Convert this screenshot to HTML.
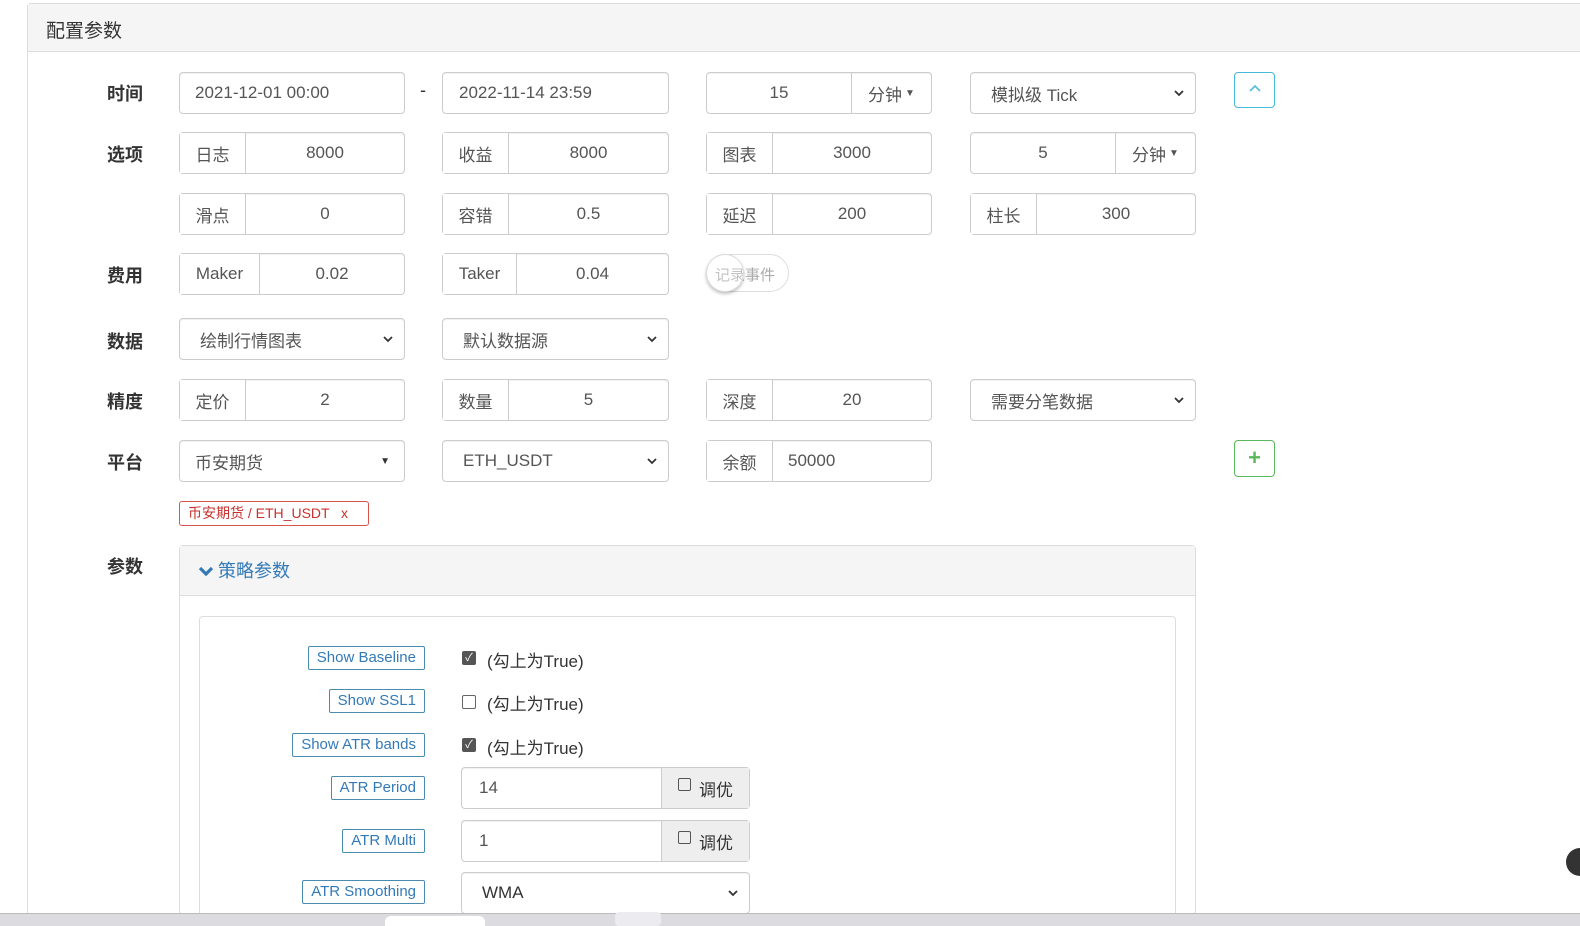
<!DOCTYPE html>
<html><head><meta charset="utf-8"><style>
*{box-sizing:border-box;margin:0;padding:0}
html,body{width:1580px;height:926px;overflow:hidden}
body{background:#fff;font-family:"Liberation Sans","Noto Sans CJK SC",sans-serif;color:#555;position:relative}
.a{position:absolute}
.panel{left:27px;top:3px;width:1560px;height:920px;border:1px solid #ddd;border-radius:4px}
.ph{left:28px;top:4px;width:1552px;height:48px;background:#f5f5f5;border-bottom:1px solid #ddd;font-size:19px;color:#333;padding:12px 18px}
.lb{font-weight:bold;font-size:18px;color:#333;left:107px}
.box{height:42px;border:1px solid #ccc;border-radius:4px;display:flex;font-size:17px;color:#555;background:#fff;box-shadow:inset 0 1px 1px rgba(0,0,0,.06);white-space:nowrap}
.ad{border-right:1px solid #ccc;display:flex;align-items:center;justify-content:center;color:#555;background:#fff}
.v{flex:1;display:flex;align-items:center;justify-content:center}
.sel{align-items:center;padding-left:20px;justify-content:space-between;padding-right:10px}
.chev{width:12px;height:12px}
.tag{border:1px solid #4a8bb0;border-radius:2px;color:#337ab7;font-size:15px;height:24px;line-height:22px;padding:0 8px;right:1155px;white-space:nowrap}
.cb{width:14px;height:14px;border-radius:2px}
</style></head><body>
<div class="a panel"></div>
<div class="a ph">配置参数</div>

<div class="a lb" style="top:80px">时间</div>
<div class="a lb" style="top:141px">选项</div>
<div class="a lb" style="top:262px">费用</div>
<div class="a lb" style="top:328px">数据</div>
<div class="a lb" style="top:388px">精度</div>
<div class="a lb" style="top:449px">平台</div>
<div class="a lb" style="top:553px">参数</div>

<div class="a box" style="left:179px;top:72px;width:226px;padding-left:15px;align-items:center">2021-12-01 00:00</div>
<div class="a" style="left:420px;top:80px;font-size:18px;color:#333">-</div>
<div class="a box" style="left:442px;top:72px;width:227px;padding-left:16px;align-items:center">2022-11-14 23:59</div>
<div class="a box" style="left:706px;top:72px;width:226px"><div class="v" style="border-right:1px solid #ccc;width:145px;flex:none">15</div><div class="v">分钟 <span style="font-size:10px;margin-left:3px">▼</span></div></div>
<div class="a box sel" style="left:970px;top:72px;width:226px"><span>模拟级 Tick</span><svg class="chev" viewBox="0 0 12 12"><path d="M2 4l4 4 4-4" stroke="#333" stroke-width="1.8" fill="none"/></svg></div>
<div class="a" style="left:1234px;top:72px;width:41px;height:36px;border:1px solid #46b8da;border-radius:4px"><svg style="position:absolute;left:13px;top:10px" width="14" height="10" viewBox="0 0 14 10"><path d="M2 8l5-5 5 5" stroke="#5bc0de" stroke-width="1.8" fill="none"/></svg></div>

<div class="a box" style="left:179px;top:132px;width:226px"><div class="ad" style="width:66px">日志</div><div class="v">8000</div></div>
<div class="a box" style="left:442px;top:132px;width:227px"><div class="ad" style="width:66px">收益</div><div class="v">8000</div></div>
<div class="a box" style="left:706px;top:132px;width:226px"><div class="ad" style="width:66px">图表</div><div class="v">3000</div></div>
<div class="a box" style="left:970px;top:132px;width:226px"><div class="v" style="border-right:1px solid #ccc;width:145px;flex:none">5</div><div class="v">分钟 <span style="font-size:10px;margin-left:3px">▼</span></div></div>

<div class="a box" style="left:179px;top:193px;width:226px"><div class="ad" style="width:66px">滑点</div><div class="v">0</div></div>
<div class="a box" style="left:442px;top:193px;width:227px"><div class="ad" style="width:66px">容错</div><div class="v">0.5</div></div>
<div class="a box" style="left:706px;top:193px;width:226px"><div class="ad" style="width:66px">延迟</div><div class="v">200</div></div>
<div class="a box" style="left:970px;top:193px;width:226px"><div class="ad" style="width:66px">柱长</div><div class="v">300</div></div>

<div class="a box" style="left:179px;top:253px;width:226px"><div class="ad" style="width:80px">Maker</div><div class="v">0.02</div></div>
<div class="a box" style="left:442px;top:253px;width:227px"><div class="ad" style="width:74px">Taker</div><div class="v">0.04</div></div>
<div class="a" style="left:706px;top:254px;width:83px;height:38px;border:1px solid #ddd;border-radius:19px;font-size:15px;color:#aaa;padding:9px 0 0 8px;white-space:nowrap">记录事件</div>
<div class="a" style="left:706px;top:254px;width:38px;height:38px;border-radius:50%;box-shadow:0 2px 3px rgba(0,0,0,.25);border:1px solid #ddd;background:rgba(255,255,255,.3)"></div>

<div class="a box sel" style="left:179px;top:318px;width:226px"><span>绘制行情图表</span><svg class="chev" viewBox="0 0 12 12"><path d="M2 4l4 4 4-4" stroke="#333" stroke-width="1.8" fill="none"/></svg></div>
<div class="a box sel" style="left:442px;top:318px;width:227px"><span>默认数据源</span><svg class="chev" viewBox="0 0 12 12"><path d="M2 4l4 4 4-4" stroke="#333" stroke-width="1.8" fill="none"/></svg></div>

<div class="a box" style="left:179px;top:379px;width:226px"><div class="ad" style="width:66px">定价</div><div class="v">2</div></div>
<div class="a box" style="left:442px;top:379px;width:227px"><div class="ad" style="width:66px">数量</div><div class="v">5</div></div>
<div class="a box" style="left:706px;top:379px;width:226px"><div class="ad" style="width:66px">深度</div><div class="v">20</div></div>
<div class="a box sel" style="left:970px;top:379px;width:226px"><span>需要分笔数据</span><svg class="chev" viewBox="0 0 12 12"><path d="M2 4l4 4 4-4" stroke="#333" stroke-width="1.8" fill="none"/></svg></div>

<div class="a box sel" style="left:179px;top:440px;width:226px;padding-left:15px;padding-right:14px"><span>币安期货</span><span style="font-size:10px;color:#333">▼</span></div>
<div class="a box sel" style="left:442px;top:440px;width:227px"><span>ETH_USDT</span><svg class="chev" viewBox="0 0 12 12"><path d="M2 4l4 4 4-4" stroke="#333" stroke-width="1.8" fill="none"/></svg></div>
<div class="a box" style="left:706px;top:440px;width:226px"><div class="ad" style="width:66px">余额</div><div class="v" style="justify-content:flex-start;padding-left:15px">50000</div></div>
<div class="a" style="left:1234px;top:440px;width:41px;height:37px;border:1px solid #5cb85c;border-radius:4px;color:#5cb85c;font-weight:bold;font-size:22px;text-align:center;line-height:34px">+</div>

<div class="a" style="left:179px;top:501px;width:190px;height:25px;border:1px solid #d9534f;border-radius:3px;color:#c9302c;font-size:14px;line-height:23px;padding-left:8px;white-space:nowrap">币安期货 / ETH_USDT &nbsp; x</div>

<div class="a" style="left:179px;top:545px;width:1017px;height:370px;border:1px solid #ddd;border-radius:4px"></div>
<div class="a" style="left:180px;top:546px;width:1015px;height:50px;background:#f5f5f5;border-bottom:1px solid #ddd"></div>
<div class="a" style="left:198px;top:557px;font-size:18px;color:#337ab7;white-space:nowrap"><svg width="16" height="12" viewBox="0 0 16 12" style="margin-right:4px"><path d="M2 3l6 6 6-6" stroke="#337ab7" stroke-width="3.2" fill="none"/></svg>策略参数</div>
<div class="a" style="left:199px;top:616px;width:977px;height:300px;border:1px solid #ddd;border-radius:4px"></div>

<div class="a tag" style="top:646px">Show Baseline</div>
<div class="a tag" style="top:689px">Show SSL1</div>
<div class="a tag" style="top:733px">Show ATR bands</div>
<div class="a tag" style="top:776px">ATR Period</div>
<div class="a tag" style="top:829px">ATR Multi</div>
<div class="a tag" style="top:880px">ATR Smoothing</div>

<div class="a cb" style="left:462px;top:651px;background:#555;color:#fff;font-size:11px;line-height:14px;text-align:center">✓</div>
<div class="a" style="left:487px;top:647px;font-size:17px;color:#333;white-space:nowrap">(勾上为True)</div>
<div class="a cb" style="left:462px;top:695px;border:1px solid #666"></div>
<div class="a" style="left:487px;top:690px;font-size:17px;color:#333;white-space:nowrap">(勾上为True)</div>
<div class="a cb" style="left:462px;top:738px;background:#555;color:#fff;font-size:11px;line-height:14px;text-align:center">✓</div>
<div class="a" style="left:487px;top:734px;font-size:17px;color:#333;white-space:nowrap">(勾上为True)</div>

<div class="a box" style="left:461px;top:767px;width:289px"><div class="v" style="justify-content:flex-start;padding-left:17px;border-right:1px solid #ccc;width:200px;flex:none">14</div><div class="v" style="background:#eee;color:#333"><span class="cb" style="border:1px solid #555;display:inline-block;width:13px;height:13px;margin-right:8px;margin-top:-8px"></span>调优</div></div>
<div class="a box" style="left:461px;top:820px;width:289px"><div class="v" style="justify-content:flex-start;padding-left:17px;border-right:1px solid #ccc;width:200px;flex:none">1</div><div class="v" style="background:#eee;color:#333"><span class="cb" style="border:1px solid #555;display:inline-block;width:13px;height:13px;margin-right:8px;margin-top:-8px"></span>调优</div></div>
<div class="a box sel" style="left:461px;top:872px;width:289px;color:#333"><span>WMA</span><svg class="chev" viewBox="0 0 12 12"><path d="M2 4l4 4 4-4" stroke="#333" stroke-width="1.8" fill="none"/></svg></div>

<div class="a" style="left:1566px;top:848px;width:14px;height:28px;border-radius:14px 0 0 14px;background:#333"></div>
<div class="a" style="left:0;top:913px;width:1580px;height:13px;background:#dcdce0;border-top:1px solid #bbb"></div>
<div class="a" style="left:385px;top:916px;width:100px;height:10px;background:#fff;border-radius:6px 6px 0 0"></div>
<div class="a" style="left:615px;top:912px;width:46px;height:14px;background:#ececf0;border-radius:4px"></div>
</body></html>
